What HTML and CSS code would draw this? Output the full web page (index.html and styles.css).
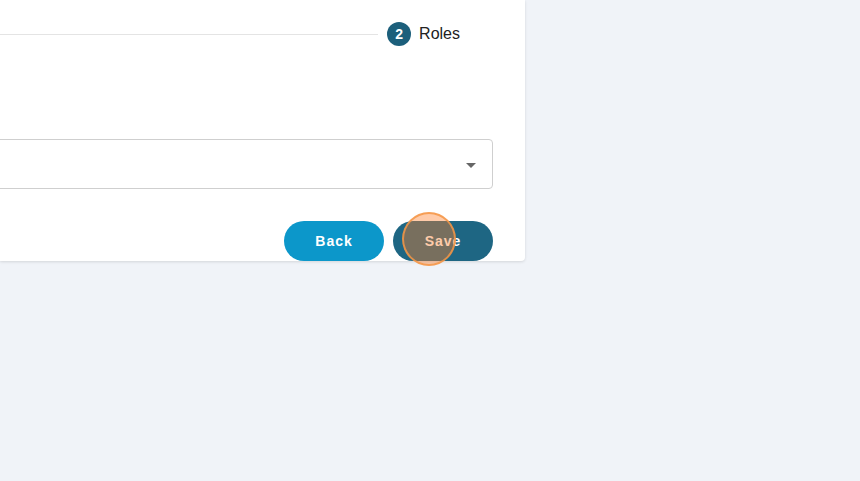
FILE: index.html
```html
<!DOCTYPE html>
<html>
<head>
<meta charset="utf-8">
<link rel="stylesheet" href="styles.css">
</head>
<body>
<div class="card">
  <div class="stepper">
    <div class="step-line"></div>
    <div class="step-num">2</div>
    <div class="step-label">Roles</div>
  </div>
  <div class="select">
    <span class="caret"></span>
  </div>
  <div class="actions">
    <button class="btn btn-back">Back</button>
    <button class="btn btn-save">Save</button>
  </div>
  <div class="click-dot"></div>
</div>
</body>
</html>
```
FILE: styles.css
```css
html, body {
  margin: 0;
  padding: 0;
}
body {
  background: #f0f3f8;
  width: 860px;
  height: 481px;
  overflow: hidden;
  font-family: "Liberation Sans", Arial, sans-serif;
}
.card {
  position: relative;
  width: 525px;
  height: 261px;
  box-sizing: border-box;
  padding: 0 32px 0 0;
  background: #fff;
  border-radius: 0 0 4px 0;
  box-shadow: 0 1px 3px rgba(0, 0, 0, 0.12);
}
.stepper {
  display: flex;
  align-items: center;
  height: 24px;
  padding-top: 22px;
  margin-right: 33px;
}
.step-line {
  flex: 1;
  height: 1px;
  background: #e4e4e4;
  margin-right: 9px;
}
.step-num {
  width: 24px;
  height: 24px;
  border-radius: 50%;
  background: #1c5f7b;
  color: #fff;
  font-size: 14px;
  font-weight: bold;
  display: flex;
  align-items: center;
  justify-content: center;
}
.step-label {
  margin-left: 8px;
  font-size: 16px;
  color: #222;
}
.select {
  margin-top: 93px;
  margin-left: -10px;
  height: 48px;
  border: 1px solid #cfcfcf;
  border-radius: 4px;
  display: flex;
  align-items: center;
  justify-content: flex-end;
  padding-right: 16px;
}
.caret {
  width: 0;
  height: 0;
  border-left: 5px solid transparent;
  border-right: 5px solid transparent;
  border-top: 5px solid #666;
  margin-top: 2px;
}
.actions {
  display: flex;
  justify-content: flex-end;
  gap: 9px;
  margin-top: 32px;
}
.btn {
  width: 100px;
  height: 40px;
  border: none;
  border-radius: 20px;
  color: #fff;
  font-family: "Liberation Sans", Arial, sans-serif;
  font-size: 14px;
  font-weight: bold;
  letter-spacing: 1px;
  padding: 0;
}
.btn-back {
  background: #0c97ca;
}
.btn-save {
  background: #1e6683;
}
.click-dot {
  position: absolute;
  left: 402px;
  top: 212px;
  width: 54px;
  height: 54px;
  box-sizing: border-box;
  border-radius: 50%;
  border: 2px solid rgba(245, 150, 70, 0.85);
  background: rgba(255, 125, 40, 0.4);
}
```
